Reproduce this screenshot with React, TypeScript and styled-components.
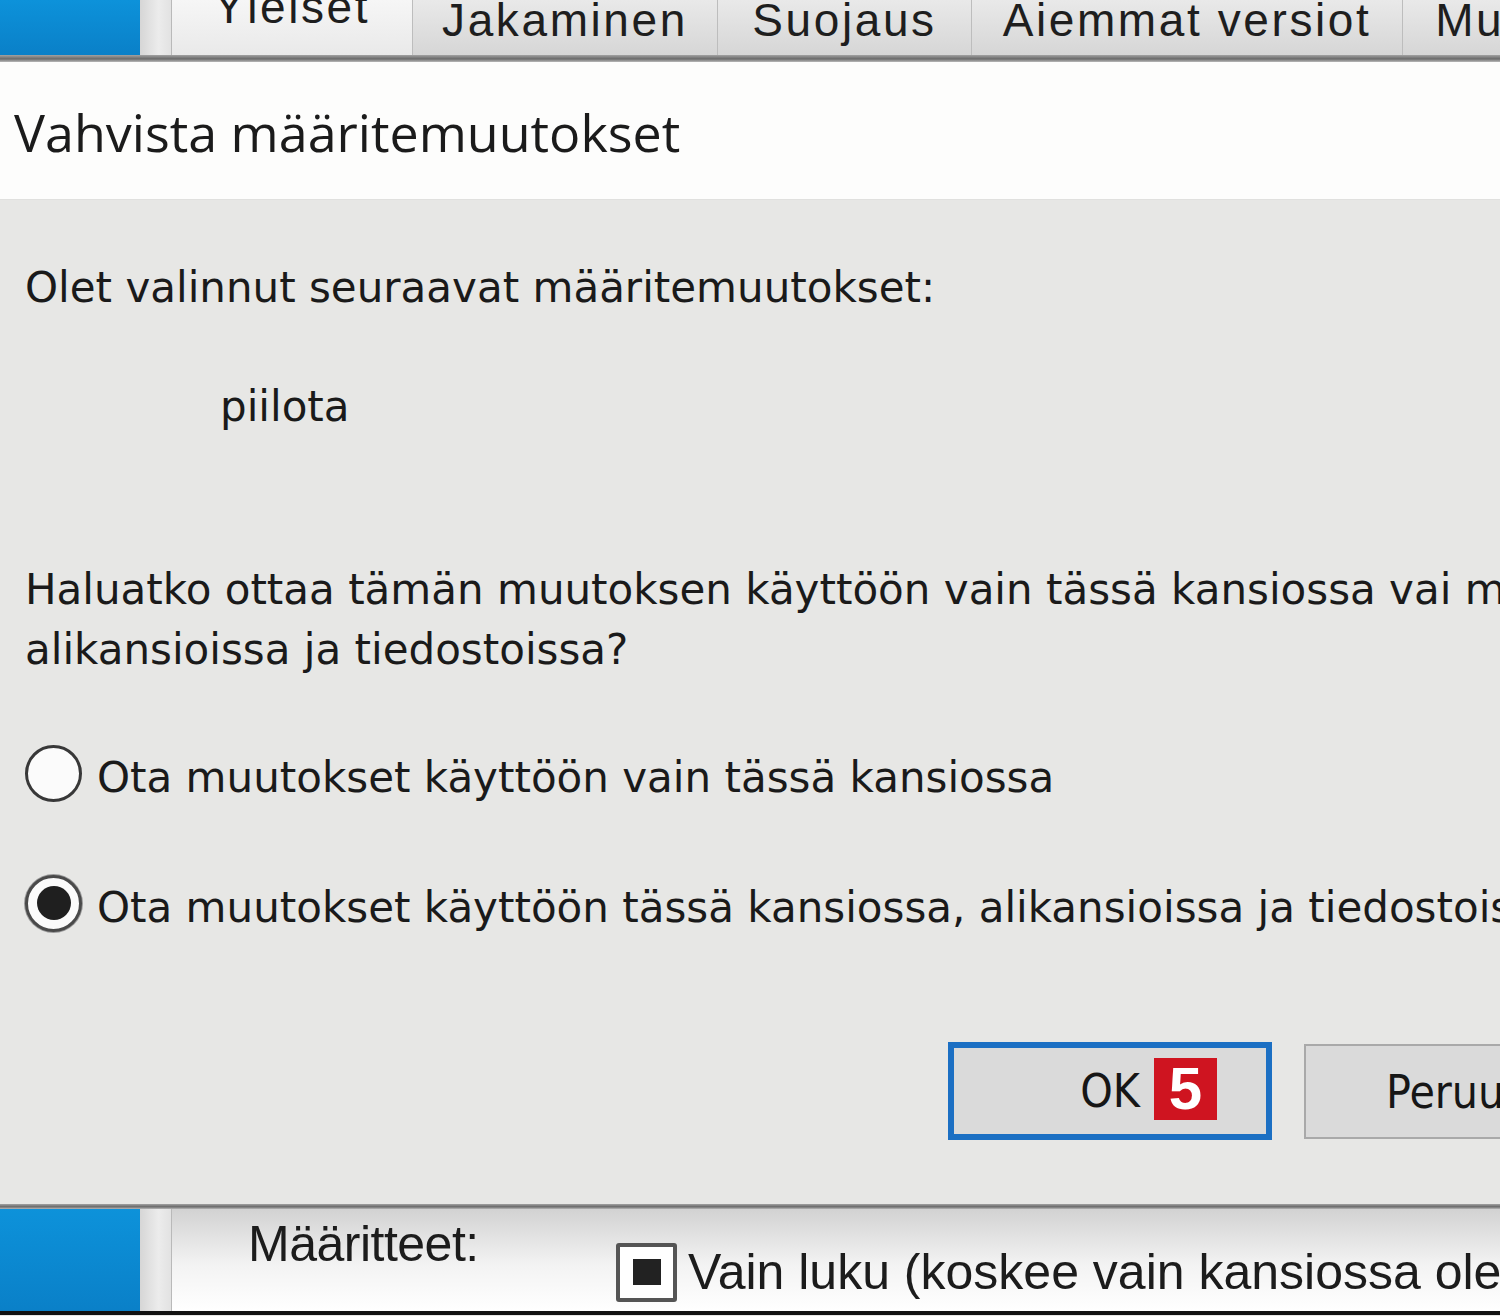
import styled, { createGlobalStyle } from 'styled-components';

const GlobalStyle = createGlobalStyle`
  html, body {
    margin: 0;
    padding: 0;
    background: #e7e7e5;
  }
  body {
    width: 1500px;
    height: 1316px;
    overflow: hidden;
  }
`;

const Page = styled.div`
  width: 1500px;
  height: 1316px;
  overflow: hidden;
  display: flex;
  flex-direction: column;
`;

const TabStrip = styled.div`
  display: flex;
  height: 55px;
  flex-shrink: 0;
  background: linear-gradient(#e6e6e6, #d4d4d4);
`;

const SideBlue = styled.div`
  width: 140px;
  flex-shrink: 0;
  background: linear-gradient(#0d92da, #0a80c8);
`;

const Gutter = styled.div`
  width: 31px;
  flex-shrink: 0;
  border-right: 1px solid #b9b9b9;
  background: linear-gradient(90deg, #d6d6d6, #ececec 60%, #e2e2e2);
`;

const Tab = styled.div<{ $w: number; $active?: boolean }>`
  width: ${p => p.$w}px;
  flex-shrink: 0;
  box-sizing: border-box;
  display: flex;
  justify-content: center;
  overflow: hidden;
  border-right: 1px solid #bdbdbd;
  background: ${p => (p.$active ? 'linear-gradient(#f6f6f6, #e9e9e9)' : 'linear-gradient(#e9e9e9, #d6d6d6)')};
  font-family: 'Liberation Sans', Arial, sans-serif;
  font-size: 46px;
  line-height: 46px;
  letter-spacing: 2.6px;
  color: #1e1e1e;
  white-space: nowrap;
`;

const TabLabel = styled.span<{ $active?: boolean }>`
  margin-top: ${p => (p.$active ? -16 : -3)}px;
`;

const Divider = styled.div<{ $h: number }>`
  height: ${p => p.$h}px;
  flex-shrink: 0;
  background: linear-gradient(#a2a2a2, #6b6b6b 55%, #b8b8b8);
`;

const TitleBar = styled.div`
  height: 138px;
  flex-shrink: 0;
  box-sizing: border-box;
  padding: 35px 0 0 14px;
  background: #fdfdfc;
  border-bottom: 1px solid #e0e0de;
  font-family: 'Open Sans', 'Noto Sans', sans-serif;
  font-size: 52px;
  line-height: 70px;
  color: #1b1b1b;
  white-space: nowrap;
`;

const Panel = styled.div`
  width: 1660px;
  height: 1004px;
  flex-shrink: 0;
  box-sizing: border-box;
  padding: 58px 0 0 25px;
  background: #e7e7e5;
  font-family: 'DejaVu Sans', Verdana, sans-serif;
  font-size: 42px;
  line-height: 60px;
  color: #1a1a1a;
  white-space: nowrap;
`;

const Para = styled.p<{ $top?: number; $indent?: number }>`
  margin: ${p => p.$top ?? 0}px 0 0 0;
  padding-left: ${p => p.$indent ?? 0}px;
`;

const RadioRow = styled.div<{ $top: number }>`
  display: flex;
  align-items: center;
  gap: 15px;
  height: 60px;
  margin-top: ${p => p.$top}px;
`;

const RadioCircle = styled.span<{ $checked?: boolean }>`
  width: 57px;
  height: 57px;
  margin-bottom: 10px;
  flex-shrink: 0;
  box-sizing: border-box;
  border-radius: 50%;
  border: 3px solid ${p => (p.$checked ? '#4a4a4a' : '#383838')};
  background: #fbfbfb;
  display: flex;
  align-items: center;
  justify-content: center;
  box-shadow: ${p => (p.$checked ? '0 0 0 1px #9a9a9a' : 'none')};

  &::after {
    content: '';
    display: ${p => (p.$checked ? 'block' : 'none')};
    width: 34px;
    height: 34px;
    border-radius: 50%;
    background: #1f1f1f;
  }
`;

const ButtonRow = styled.div`
  display: flex;
  justify-content: flex-end;
  align-items: flex-start;
  gap: 32px;
  padding-right: 32px;
  margin-top: 104px;
`;

const DialogButton = styled.div<{ $default?: boolean }>`
  position: relative;
  width: 324px;
  height: ${p => (p.$default ? 98 : 95)}px;
  margin-top: ${p => (p.$default ? 0 : 2)}px;
  box-sizing: border-box;
  border: ${p => (p.$default ? '6px solid #1b6fc3' : '2px solid #a9a9a9')};
  background: #dadada;
  display: flex;
  align-items: center;
  justify-content: center;
  font-family: 'DejaVu Sans Condensed', 'DejaVu Sans', sans-serif;
  font-size: 46px;
  color: #161616;
`;

const StepBadge = styled.span`
  position: absolute;
  left: 200px;
  top: 10px;
  width: 63px;
  height: 62px;
  background: #cf1420;
  color: #fff;
  font-family: 'Liberation Sans', Arial, sans-serif;
  font-weight: 700;
  font-size: 60px;
  line-height: 1;
  display: flex;
  align-items: center;
  justify-content: center;
`;

const BottomStrip = styled.div`
  display: flex;
  height: 102px;
  flex-shrink: 0;
  border-bottom: 4px solid #121212;
  background: linear-gradient(#d2d2d2, #f3f3f3 55%, #ffffff);
`;

const BottomContent = styled.div`
  display: flex;
  padding-left: 76px;
  font-family: 'Liberation Sans', Arial, sans-serif;
  font-size: 50px;
  line-height: 50px;
  color: #1c1c1c;
  white-space: nowrap;
`;

const FieldLabel = styled.div`
  width: 368px;
  padding-top: 10px;
  letter-spacing: -0.5px;
`;

const CheckRow = styled.div`
  display: flex;
  align-items: center;
  gap: 11px;
  margin-top: 33px;
  height: 60px;
`;

const CheckBox = styled.span`
  width: 61px;
  height: 59px;
  box-sizing: border-box;
  border: 4px solid #555;
  border-radius: 3px;
  background: #fff;
  display: flex;
  align-items: center;
  justify-content: center;
  flex-shrink: 0;

  &::after {
    content: '';
    width: 28px;
    height: 26px;
    background: #222;
  }
`;

const tabs = [
  { label: 'Yleiset', w: 241, active: true },
  { label: 'Jakaminen', w: 305 },
  { label: 'Suojaus', w: 254 },
  { label: 'Aiemmat versiot', w: 431 },
  { label: 'Mukauta', w: 260 },
];

function App() {
  return (
    <Page>
      <GlobalStyle />
      <TabStrip>
        <SideBlue />
        <Gutter />
        {tabs.map(t => (
          <Tab key={t.label} $w={t.w} $active={t.active}>
            <TabLabel $active={t.active}>{t.label}</TabLabel>
          </Tab>
        ))}
      </TabStrip>
      <Divider $h={7} />

      <TitleBar>Vahvista määritemuutokset</TitleBar>

      <Panel>
        <Para>Olet valinnut seuraavat määritemuutokset:</Para>
        <Para $top={59} $indent={195}>piilota</Para>
        <Para $top={123}>
          Haluatko ottaa tämän muutoksen käyttöön vain tässä kansiossa vai myös kaikissa sen
          <br />
          alikansioissa ja tiedostoissa?
        </Para>
        <RadioRow $top={68}>
          <RadioCircle />
          <span>Ota muutokset käyttöön vain tässä kansiossa</span>
        </RadioRow>
        <RadioRow $top={70}>
          <RadioCircle $checked />
          <span>Ota muutokset käyttöön tässä kansiossa, alikansioissa ja tiedostoissa</span>
        </RadioRow>
        <ButtonRow>
          <DialogButton $default>
            OK
            <StepBadge>5</StepBadge>
          </DialogButton>
          <DialogButton>Peruuta</DialogButton>
        </ButtonRow>
      </Panel>

      <Divider $h={5} />
      <BottomStrip>
        <SideBlue />
        <Gutter />
        <BottomContent>
          <FieldLabel>Määritteet:</FieldLabel>
          <CheckRow>
            <CheckBox />
            <span>Vain luku (koskee vain kansiossa olevia tiedostoja)</span>
          </CheckRow>
        </BottomContent>
      </BottomStrip>
    </Page>
  );
}

export default App;
